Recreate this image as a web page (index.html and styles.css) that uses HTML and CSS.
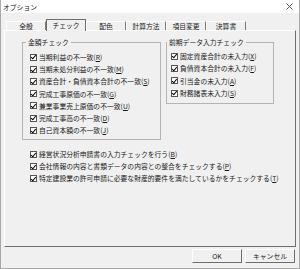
FILE: index.html
```html
<!DOCTYPE html>
<html lang="ja">
<head>
<meta charset="UTF-8" />
<title>オプション</title>
<link rel="stylesheet" href="styles.css">
</head>
<body>
  <div class="window">
    <div class="titlebar">
      <span class="title">オプション</span>
      <svg class="close" width="7" height="7" viewBox="0 0 7 7">
        <path d="M0.5 0.5 L6.5 6.5 M6.5 0.5 L0.5 6.5" stroke="#444" stroke-width="0.9" fill="none"/>
      </svg>
    </div>

    <div class="content">
      <div class="tabs">
        <div class="tab">全般</div>
        <div class="tab active">チェック</div>
        <div class="tab">配色</div>
        <div class="tab">計算方法</div>
        <div class="tab">項目変更</div>
        <div class="tab">決算書</div>
      </div>

      <div class="panel">
        <div class="groups">
          <fieldset class="group group-amount">
            <legend>金額チェック</legend>
            <div class="rows">
              <div class="check"><span class="box"></span><span>当期利益の不一致(<u>R</u>)</span></div>
              <div class="check"><span class="box"></span><span>当期未処分利益の不一致(<u>M</u>)</span></div>
              <div class="check"><span class="box"></span><span>資産合計・負債資本合計の不一致(<u>S</u>)</span></div>
              <div class="check"><span class="box"></span><span>完成工事原価の不一致(<u>G</u>)</span></div>
              <div class="check"><span class="box"></span><span>兼業事業売上原価の不一致(<u>U</u>)</span></div>
              <div class="check"><span class="box"></span><span>完成工事高の不一致(<u>D</u>)</span></div>
              <div class="check"><span class="box"></span><span>自己資本額の不一致(<u>J</u>)</span></div>
            </div>
          </fieldset>

          <fieldset class="group group-prev">
            <legend>前期データ入力チェック</legend>
            <div class="rows">
              <div class="check"><span class="box"></span><span>固定資産合計の未入力(<u>X</u>)</span></div>
              <div class="check"><span class="box"></span><span>負債資本合計の未入力(<u>F</u>)</span></div>
              <div class="check"><span class="box"></span><span>引当金の未入力(<u>A</u>)</span></div>
              <div class="check"><span class="box"></span><span>財務諸表未入力(<u>S</u>)</span></div>
            </div>
          </fieldset>
        </div>

        <div class="extra">
          <div class="check"><span class="box"></span><span>経営状況分析申請書の入力チェックを行う(<u>B</u>)</span></div>
          <div class="check"><span class="box"></span><span>会社情報の内容と書類データの内容との整合をチェックする(<u>P</u>)</span></div>
          <div class="check"><span class="box"></span><span>特定建設業の許可申請に必要な財産的要件を満たしているかをチェックする(<u>T</u>)</span></div>
        </div>
      </div>

      <div class="buttons">
        <button class="btn">OK</button>
        <button class="btn">キャンセル</button>
      </div>
    </div>
  </div>
</body>
</html>
```

FILE: styles.css
```css
* {
  box-sizing: border-box;
}

body {
  margin: 0;
  font-family: "Noto Sans CJK JP", "DejaVu Sans", sans-serif;
  font-size: 6.8px;
  color: #1a1a1a;
}

.window {
  width: 300px;
  height: 269px;
  background: #f0f0f0;
  border: 1px solid #a8a8a8;
  border-top: none;
  display: flex;
  flex-direction: column;
}

.titlebar {
  height: 13px;
  background: #fff;
  display: flex;
  align-items: center;
  justify-content: space-between;
  padding: 0 6px 0 2px;
}

.content {
  padding: 6px 3px 0 3px;
}

/* tabs */
.tabs {
  display: flex;
  align-items: flex-end;
  height: 11px;
  padding-left: 2px;
}

.tab {
  width: 40px;
  height: 9px;
  line-height: 8px;
  text-align: center;
  border-top: 1px solid #fff;
  border-left: 1px solid #fff;
  border-right: 1px solid #7a7a7a;
}

.tab.active {
  height: 12px;
  line-height: 10px;
  margin-bottom: -1px;
  background: #f0f0f0;
  border: 1px solid #6e6e6e;
  border-bottom: none;
  position: relative;
  z-index: 1;
}

.panel {
  height: 217px;
  border: 1px solid;
  border-color: #fff #6e6e6e #6e6e6e #fff;
  padding: 5px 0 0 17px;
}

/* group boxes */
.groups {
  display: flex;
  align-items: flex-start;
  gap: 5px;
}

.group {
  margin: 0;
  padding: 0;
  border: 1px solid #b4b4b4;
}

.group legend {
  padding: 0 2px;
  line-height: 12px;
}

.group-amount {
  width: 139px;
}
.group-amount legend {
  margin-left: 3px;
}
.group-amount .rows {
  padding: 3px 0 3px 7px;
}

.group-prev {
  width: 108px;
}
.group-prev .rows {
  padding: 2px 0 4px 4px;
}
.group-prev .check {
  height: 12.3px;
}

.check {
  display: flex;
  align-items: center;
  height: 12.2px;
  white-space: nowrap;
}

.check u {
  text-underline-offset: 1px;
}

.box {
  flex: none;
  width: 7px;
  height: 7px;
  margin-right: 2px;
  background: #fff;
  border: 1px solid #555;
  position: relative;
}
.box::after {
  content: "";
  position: absolute;
  left: 1.3px;
  top: -0.2px;
  width: 2px;
  height: 3.6px;
  border: solid #000;
  border-width: 0 1.2px 1.2px 0;
  transform: rotate(40deg);
}

.extra {
  margin: 8px 0 0 8px;
}
.extra .check {
  height: 12px;
}

/* buttons */
.buttons {
  display: flex;
  justify-content: flex-end;
  gap: 3px;
  padding-right: 1px;
  margin-top: 2px;
}

.btn {
  width: 50px;
  height: 14px;
  padding: 0;
  font: inherit;
  color: #1a1a1a;
  background: #f0f0f0;
  border: 1px solid;
  border-color: #fff #6e6e6e #6e6e6e #fff;
}
```
